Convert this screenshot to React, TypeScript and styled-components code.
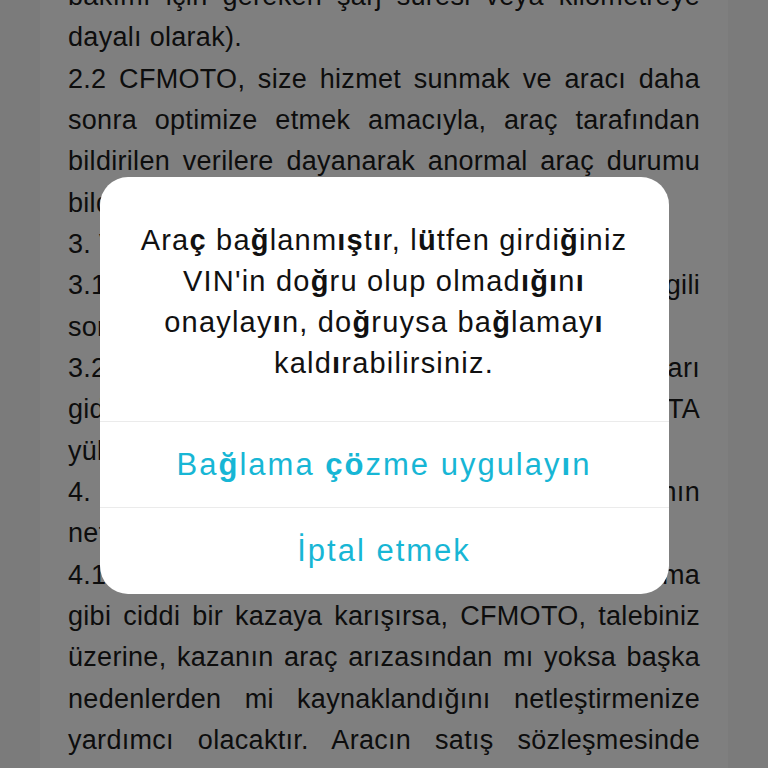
import styled, {createGlobalStyle} from "styled-components";
import * as React from "react";

const GlobalStyle = createGlobalStyle`
    html, body {
        margin: 0;
        padding: 0;
        background: #f6f6f6;
    }
    body {
        font-family: "Liberation Sans", Arial, sans-serif;
    }
`;

const Screen = styled.div`
    position: relative;
    width: 768px;
    height: 768px;
    overflow: hidden;
    display: flex;
    justify-content: center;
    background: #f6f6f6;
`;

const Page = styled.div`
    width: 688px;
    height: 100%;
    background: #ffffff;
    padding: 0 28px;
    box-sizing: border-box;
`;

const Text = styled.div`
    margin-top: -24px;
    font-size: 27px;
    letter-spacing: 0.3px;
    line-height: 41.33px;
    color: #1a1a1a;
`;

const Line = styled.div<{ $full?: boolean }>`
    white-space: nowrap;
    text-align: justify;
    text-align-last: ${({$full}) => $full ? 'justify' : 'left'};
`;

const Overlay = styled.div`
    position: absolute;
    inset: 0;
    background: rgba(0, 0, 0, 0.5);
    display: flex;
    align-items: flex-start;
    justify-content: center;
    padding-top: 177px;
`;

const Dialog = styled.div`
    width: 569px;
    background: #ffffff;
    border-radius: 28px;
    overflow: hidden;
    display: flex;
    flex-direction: column;
`;

const Message = styled.div`
    padding: 43px 10px 37px;
    text-align: center;
    font-size: 29px;
    letter-spacing: 1.2px;
    line-height: 41px;
    color: #111111;
    white-space: nowrap;
`;

const Action = styled.button<{ $last?: boolean }>`
    height: ${({$last}) => $last ? '87px' : '86px'};
    border: none;
    border-top: 1px solid #ebebeb;
    background: transparent;
    font-family: "Liberation Sans", Arial, sans-serif;
    font-size: 31px;
    letter-spacing: 2px;
    color: #17b6d5;
    cursor: pointer;
    padding: 0;
`;

const Heavy = styled.b`
    font-weight: 700;
`;

// the original font renders Turkish letters heavier than the rest
const marked = (text: string) =>
    text.split(/([çğışüö])/).map((part, i) =>
        /^[çğışüö]$/.test(part) ? <Heavy key={i}>{part}</Heavy> : part
    );

const lines: [string, boolean][] = [
    ['bakımı için gereken şarj süresi veya kilometreye', true],
    ['dayalı olarak).', false],
    ['2.2 CFMOTO, size hizmet sunmak ve aracı daha', true],
    ['sonra optimize etmek amacıyla, araç tarafından', true],
    ['bildirilen verilere dayanarak anormal araç durumu', true],
    ['bildirimleri gönderebilir.', false],
    ['3. Verilerin paylaşılması', false],
    ['3.1 CFMOTO, aracın kullanımı ile ilgili', true],
    ['sorunları çözmek için.', false],
    ['3.2 Araç verileri, yazılım hataları ve arızaları', true],
    ['gidermek ve sistem performansını iyileştirme OTA', true],
    ['yükseltmeleri için.', false],
    ['4. Kaza durumunda kazanın', true],
    ['netleştirilmesi', false],
    ['4.1 Aracınız çarpışma veya devrilme ma', true],
    ['gibi ciddi bir kazaya karışırsa, CFMOTO, talebiniz', true],
    ['üzerine, kazanın araç arızasından mı yoksa başka', true],
    ['nedenlerden mi kaynaklandığını netleştirmenize', true],
    ['yardımcı olacaktır. Aracın satış sözleşmesinde', true],
];

export default function App() {
    return (
        <>
            <GlobalStyle/>
            <Screen>
                <Page>
                    <Text>
                        {lines.map(([text, full], i) => (
                            <Line key={i} $full={full}>{text}</Line>
                        ))}
                    </Text>
                </Page>
                <Overlay>
                    <Dialog>
                        <Message>
                            {marked("Araç bağlanmıştır, lütfen girdiğiniz")}<br/>
                            {marked("VIN'in doğru olup olmadığını")}<br/>
                            {marked("onaylayın, doğruysa bağlamayı")}<br/>
                            {marked("kaldırabilirsiniz.")}
                        </Message>
                        <Action type="button">{marked("Bağlama çözme uygulayın")}</Action>
                        <Action type="button" $last>İptal etmek</Action>
                    </Dialog>
                </Overlay>
            </Screen>
        </>
    );
}
